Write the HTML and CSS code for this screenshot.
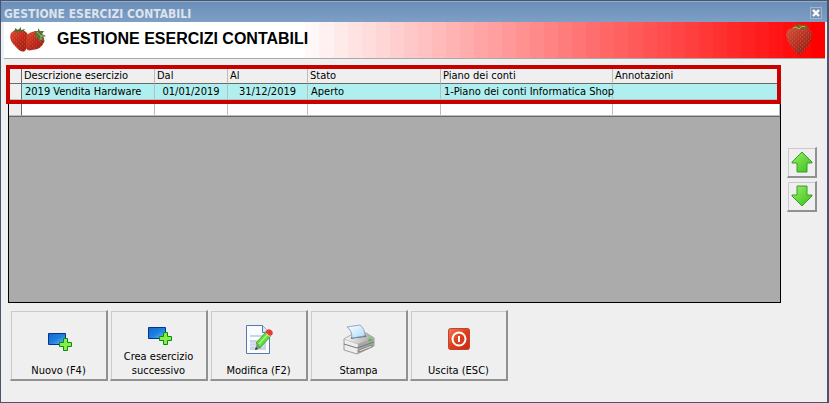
FILE: index.html
```html
<!DOCTYPE html>
<html lang="it">
<head>
<meta charset="utf-8">
<title>Gestione esercizi contabili</title>
<link rel="stylesheet" href="styles.css">
</head>
<body>
<div class="window">
  <div class="titlebar">
    <span>GESTIONE ESERCIZI CONTABILI</span>
    <button class="close" type="button" aria-label="Chiudi">
      <svg width="8" height="8" viewBox="0 0 8 8"><path d="M1 1l6 6M7 1L1 7" stroke="#fff" stroke-width="2.4"/></svg>
    </button>
  </div>
  <header class="banner">
    <svg class="berries" width="38" height="26" viewBox="0 0 38 26">
      <defs>
        <linearGradient id="berry" x1="0" y1="0" x2="1" y2="1"><stop offset="0" stop-color="#df4932"/><stop offset=".5" stop-color="#bd281b"/><stop offset="1" stop-color="#971b12"/></linearGradient>
        <pattern id="seeds" width="4" height="4" patternUnits="userSpaceOnUse"><path d="M1 1h1M3 3h1" stroke="#e88f5c" stroke-width=".8" opacity=".65"/></pattern>
      </defs>
      <path d="M2 6Q6 2 11 3Q17 3 19 8Q21 17 16 24Q12 26 7 20Q-1 13 2 6Z" fill="url(#berry)"/>
      <path d="M2 6Q6 2 11 3Q17 3 19 8Q21 17 16 24Q12 26 7 20Q-1 13 2 6Z" fill="url(#seeds)"/>
      <path d="M18 8Q23 3 29 5Q36 8 35 15Q33 22 23 23Q16 25 17 17Z" fill="url(#berry)"/>
      <path d="M18 8Q23 3 29 5Q36 8 35 15Q33 22 23 23Q16 25 17 17Z" fill="url(#seeds)"/>
      <path d="M3 5l3-2 0-2 3 2 3-3 0 3 4-1-2 3-4-1-2 2-2-2-3 1z" fill="#536b2d"/>
      <path d="M25 4l4 0 0-3 2 3 4 0-2 3 4 2-3 1 2 5-4-3-1 4-2-5-3-1 1-3z" fill="#587333"/>
      <path d="M28 5l4 4 3 0M32 9v4" stroke="#a3b779" fill="none"/>
    </svg>
    <h1>GESTIONE ESERCIZI CONTABILI</h1>
    <div class="fade" id="fade"></div>
    <svg class="berry" width="28" height="34" viewBox="0 0 28 34">
      <defs>
        <linearGradient id="ripe" x1="0" y1="0" x2="1" y2="1"><stop offset="0" stop-color="#d8503c"/><stop offset=".45" stop-color="#b83426"/><stop offset="1" stop-color="#86180f"/></linearGradient>
      </defs>
      <path d="M2 9Q5 5 13 6Q24 4 27 11Q28 19 20 28L15 33Q12 33 8 27Q-1 16 2 9Z" fill="url(#ripe)"/>
      <path d="M2 9Q5 5 13 6Q24 4 27 11Q28 19 20 28L15 33Q12 33 8 27Q-1 16 2 9Z" fill="url(#seeds)"/>
      <path d="M6 6l4-1-1-3 4 2 1-3 3 3 4-2 0 2 3 0-3 3 0 1-3-2-3 2-2-2-4 1-1-2z" fill="#6b6a26"/>
      <path d="M8 6l3-1 3 2 3-3 3 1" stroke="#c0b35c" fill="none"/>
    </svg>
  </header>
  <main>
    <div class="work">
      <div class="grid">
        <table>
          <colgroup><col class="c-sel"><col class="c-desc"><col class="c-from"><col class="c-to"><col class="c-state"><col class="c-plan"><col></colgroup>
          <thead>
            <tr><th></th><th>Descrizione esercizio</th><th>Dal</th><th>Al</th><th>Stato</th><th>Piano dei conti</th><th>Annotazioni</th></tr>
          </thead>
          <tbody>
            <tr class="selected"><td></td><td>2019 Vendita Hardware</td><td class="date">01/01/2019</td><td class="date">31/12/2019</td><td>Aperto</td><td>1-Piano dei conti Informatica Shop</td><td></td></tr>
            <tr><td></td><td></td><td></td><td></td><td></td><td></td><td></td></tr>
          </tbody>
        </table>
        <div class="highlight"></div>
      </div>
      <div class="movers">
        <button class="raised" type="button" aria-label="Sposta su">
          <svg width="22" height="22" viewBox="0 0 22 22">
            <defs><linearGradient id="green" x1="0" y1="0" x2="1" y2="1"><stop offset="0" stop-color="#9af26a"/><stop offset="1" stop-color="#38bd16"/></linearGradient></defs>
            <path d="M11 1L21 11V12H16V21H6V12H1V11Z" fill="url(#green)" stroke="#3c9c2a"/>
          </svg>
        </button>
        <button class="raised" type="button" aria-label="Sposta giù">
          <svg width="22" height="22" viewBox="0 0 22 22"><path d="M11 21L21 11V10H16V1H6V10H1V11Z" fill="url(#green)" stroke="#3c9c2a"/></svg>
        </button>
      </div>
    </div>
    <div class="actions">
      <button class="raised" type="button">
        <svg width="26" height="32" viewBox="0 0 26 32">
          <defs>
            <linearGradient id="blue" x1="0" y1="0" x2="1" y2="1"><stop offset="0" stop-color="#1268d0"/><stop offset=".5" stop-color="#1c80e0"/><stop offset="1" stop-color="#78bdf5"/></linearGradient>
            <g id="add"><path d="M1.500 9.500h17v11h-17z" fill="url(#blue)" stroke="#08308c"/><path d="M16.500 14.500h4v4h4v4h-4v4h-4v-4h-4v-4h4z" fill="#86ed4c" stroke="#078f0c"/></g>
          </defs>
          <use href="#add" x="1"/>
        </svg>
        <span>Nuovo (F4)</span>
      </button>
      <button class="raised" type="button">
        <svg width="26" height="32" viewBox="0 0 26 32"><use href="#add" x="1"/></svg>
        <span>Crea esercizio<br>successivo</span>
      </button>
      <button class="raised" type="button">
        <svg width="28" height="32" viewBox="0 0 28 32">
          <path d="M1.500 1.500h16l7 7v21h-23z" fill="#fafdff" stroke="#5777ae"/>
          <path d="M17.500 1.500v7h7" fill="#cfe8fb" stroke="#5777ae"/>
          <path d="M5 11h13v2H5zM5 16h16v10H5z" fill="#cbd4e8"/>
          <path d="M5 19h14M5 22h14" stroke="#e8edf7"/>
          <path d="M10 26l2-7 4 5z" fill="#909090"/>
          <path d="M10 26l1-3 2 2z" fill="#333"/>
          <path d="M11 19L21 8l5 4-11 12z" fill="#62dc39" stroke="#359c28" stroke-width=".8"/>
          <path d="M14 20L23 10" stroke="#a5f77f" stroke-width="1.500"/>
          <path d="M20 8l2-3 6 5-3 3z" fill="#ddd"/>
          <path d="M21 7q2-3 5-1 3 2 1 5l-2 1-5-4z" fill="#e23d2c"/>
        </svg>
        <span>Modifica (F2)</span>
      </button>
      <button class="raised" type="button">
        <svg width="32" height="32" viewBox="0 0 32 32">
          <defs>
            <linearGradient id="paper" x1="0" y1="0" x2="1" y2="1"><stop offset="0" stop-color="#fff"/><stop offset="1" stop-color="#addafa"/></linearGradient>
            <linearGradient id="shell" x1="0" y1="0" x2="1" y2="0"><stop offset="0" stop-color="#f8f8f8"/><stop offset="1" stop-color="#a4a4a4"/></linearGradient>
          </defs>
          <path d="M1 15L8 11 23 9 31 14V22L14 30 1 26Z" fill="#eee" stroke="#888" stroke-width=".8"/>
          <path d="M1 15L8 11 23 9 31 14 15 20Z" fill="url(#shell)" stroke="#aaa" stroke-width=".6"/>
          <path d="M15 20L31 14V22L14 30Z" fill="#a6a6a6"/>
          <path d="M1 20l13 4 17-6" stroke="#777" fill="none"/>
          <path d="M16 26l13-5v2l-13 5z" fill="#ddd" stroke="#666" stroke-width=".6"/>
          <path d="M8 14L23 12" stroke="#555" stroke-width="1.500"/>
          <path d="M9 14Q9 6 4 3L17 1Q22 5 22 12Z" fill="url(#paper)" stroke="#7797b8" stroke-width=".8"/>
          <ellipse cx="27" cy="16" rx="2" ry="1.300" fill="#42cc2d"/>
        </svg>
        <span>Stampa</span>
      </button>
      <button class="raised" type="button">
        <svg width="24" height="32" viewBox="0 0 24 32">
          <defs><linearGradient id="red" x1="0" y1="0" x2="1" y2="1"><stop offset="0" stop-color="#f1795a"/><stop offset=".5" stop-color="#dd3f1d"/><stop offset="1" stop-color="#c52b12"/></linearGradient></defs>
          <rect x="1.500" y="4.500" width="21" height="21" rx="2" fill="url(#red)" stroke="#c6422a"/>
          <circle cx="12" cy="15" r="6.500" fill="none" stroke="#fff" stroke-width="2"/>
          <path d="M12 12v6" stroke="#fff" stroke-width="2"/>
        </svg>
        <span>Uscita (ESC)</span>
      </button>
    </div>
  </main>
</div>
<script src="banner.js"></script>
</body>
</html>
```
FILE: styles.css
```css
* { box-sizing: border-box; }

body {
  margin: 0;
  background: #efefef;
  color: #000;
  font: 11px/14px "DejaVu Sans Condensed", Tahoma, sans-serif;
}

button {
  padding: 0;
  color: inherit;
  font: inherit;
}

.window {
  display: flex;
  flex-direction: column;
  min-height: 100vh;
  border: 1px solid #4b5568;
  border-right-width: 2px;
  background: #efefef;
}

.titlebar {
  display: flex;
  align-items: center;
  justify-content: space-between;
  height: 21px;
  padding: 3px 5px 0 3px;
  border-top: 1px solid #91b0d2;
  background: linear-gradient(#6b8fb9, #7e9fc5);
  color: #dce3ec;
  font-size: 12px;
  font-weight: bold;
}

.close {
  display: grid;
  place-items: center;
  width: 12px;
  height: 12px;
  margin-bottom: 2px;
  border: 1px solid #a0b5cf;
  background: #7891b3;
}

.banner {
  display: flex;
  align-items: center;
  height: 37px;
  margin: 0 2px 0 3px;
  border-bottom: 1px solid #a9a9a9;
  background: #fff;
  position: relative;
}

.berries { margin: 0 10px 0 5px; }

h1 {
  margin: 0;
  padding-bottom: 3px;
  font: bold 16px/20px "Liberation Sans", Arial, sans-serif;
  position: relative;
  z-index: 1;
}

.fade {
  position: absolute;
  inset: 0 0 0 auto;
  width: 65%;
  display: flex;
}

.fade span { flex: 1; }

.berry {
  position: relative;
  margin: 0 12px 2px auto;
}

main {
  display: flex;
  flex: 1;
  flex-direction: column;
  gap: 7px;
  padding: 8px 10px 21px 7px;
}

.work {
  display: flex;
  flex: 1;
  gap: 6px;
}

.grid {
  position: relative;
  flex: 1;
  border: 1px solid #000;
  background: #ababab;
}

.highlight {
  position: absolute;
  inset: -3px -1px auto -3px;
  height: 39px;
  border: 4px solid #c80000;
}

table {
  width: 100%;
  table-layout: fixed;
  border-collapse: separate;
  border-spacing: 0;
  border-bottom: 1px solid #696969;
}

.c-sel { width: 13px; }
.c-desc { width: 133px; }
.c-from { width: 73px; }
.c-to { width: 80px; }
.c-state { width: 133px; }
.c-plan { width: 172px; }

th, td {
  height: 16px;
  padding: 0 0 0 3px;
  border-right: 1px solid #bdbdbd;
  border-bottom: 1px solid #bdbdbd;
  background: #fff;
  font-weight: normal;
  text-align: left;
  white-space: nowrap;
}

th {
  padding-left: 2px;
  border-bottom-color: #696969;
  background: #efefef;
}

td:first-child, th:first-child {
  border-right-color: #696969;
  background: #efefef;
}

.selected td:not(:first-child) { background: #afefef; }

td.date { text-align: center; padding: 0; }

.movers {
  display: flex;
  flex-direction: column;
  justify-content: center;
  gap: 3px;
  padding-bottom: 12px;
}

.raised {
  border: 1px solid #efefef;
  border-right: 2px solid #919191;
  border-bottom: 2px solid #919191;
  background: #efefef;
  box-shadow: inset 1px 1px #c9c9d1;
}

.movers .raised {
  display: grid;
  place-items: center;
  width: 30px;
  height: 31px;
}

.actions {
  display: flex;
  gap: 2px;
  padding-left: 2px;
}

.actions .raised {
  display: flex;
  flex-direction: column;
  align-items: center;
  justify-content: flex-end;
  gap: 8px;
  width: 98px;
  height: 71px;
  padding-bottom: 1px;
}

.actions .raised:nth-child(2) { gap: 0; }
```
FILE: banner.js
```js
// Paints the banner as flat bands running from white to red.
const fade = document.getElementById("fade");
const bands = 38;
for (let i = 0; i < bands; i++) {
  const band = document.createElement("span");
  const level = Math.round(255 * (1 - i / (bands - 1)));
  band.style.background = `rgb(255, ${level}, ${level})`;
  fade.appendChild(band);
}
```
